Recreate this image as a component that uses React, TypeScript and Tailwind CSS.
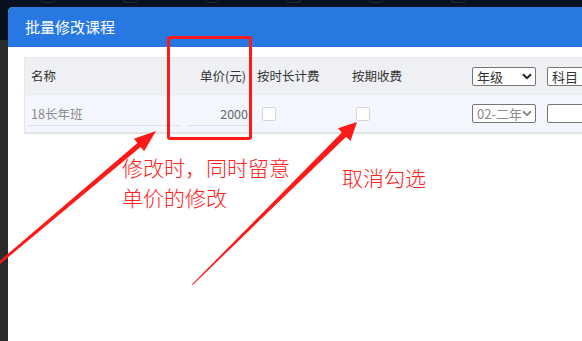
import React from "react";

const font = { fontFamily: '"Noto Sans CJK SC", "Noto Sans", sans-serif' };

function Select({ label, muted }: { label: string; muted?: boolean }) {
  return (
    <div className="flex h-[19px] w-[64px] items-center justify-between rounded-[2px] border border-[#767676] bg-white pl-[4px] pr-[3px]">
      <span className={`text-[13px] leading-none ${muted ? "text-[#8a8a8a]" : "text-[#333]"}`}>{label}</span>
      <svg width="10" height="7" viewBox="0 0 10 7">
        <path d="M1 1.2 L5 5.2 L9 1.2" fill="none" stroke={muted ? "#8a8a8a" : "#222"} strokeWidth="2" />
      </svg>
    </div>
  );
}

function Checkbox() {
  return <div className="h-[14px] w-[14px] rounded-[2px] border border-[#d5d5d5] bg-white" />;
}

export default function App() {
  return (
    <div
      className="relative h-[341px] w-[582px] overflow-hidden bg-[linear-gradient(#07111f_0_40px,#2c2c2c_40px)]"
      style={font}
    >
      {/* top bar with icons cut off */}
      <div className="flex h-[7px] gap-[68px] pl-[41px]">
        {[0, 1, 2, 3, 4, 5].map((i) => (
          <div key={i} className="-mt-[10px] h-[13px] w-[14px] rounded-[3px] border border-[#252c36]" />
        ))}
      </div>

      {/* dialog */}
      <div className="ml-[8px] h-[334px] overflow-hidden rounded-tl-[5px] bg-white">
        <div className="flex h-[40px] items-center bg-[#2878e2] pl-[17px] text-[15px] text-white">批量修改课程</div>

        <div className="pl-[16px] pt-[10px]">
          <div className="w-[620px] border-l border-[#e4e7ec]">
            {/* header row */}
            <div className="grid h-[37px] grid-cols-[159px_67px_90px_123px_77px_104px] items-center border-t border-[#e4e7ec] bg-[#eef0f4] text-[12.5px] text-[#333]">
              <div className="pl-[6px]">名称</div>
              <div className="pr-[5px] text-right">单价(元)</div>
              <div className="pl-[6px]">按时长计费</div>
              <div className="pl-[11px]">按期收费</div>
              <div className="pl-[8px]">
                <Select label="年级" />
              </div>
              <div className="pl-[6px]">
                <Select label="科目" />
              </div>
            </div>
            {/* body row */}
            <div className="grid h-[40px] grid-cols-[159px_67px_90px_123px_77px_104px] items-center border-t border-b-2 border-[#e1e5ea] border-t-[#e8edf3] bg-[#f3f7fd] text-[12.5px]">
              <div className="pl-[2px] pr-[3px]">
                <div className="mt-[4px] border-b border-[#dde3ea] pb-[2px] pl-[4px] text-[#8a8a8a]">18长年班</div>
              </div>
              <div className="pl-[4px]">
                <div className="mt-[4px] border-b border-[#dde3ea] pb-[2px] pr-[3px] text-right text-[#666]">2000</div>
              </div>
              <div className="pl-[11px]">
                <Checkbox />
              </div>
              <div className="pl-[15px]">
                <Checkbox />
              </div>
              <div className="pl-[8px]">
                <Select label="02-二年" muted />
              </div>
              <div className="pl-[6px]">
                <div className="h-[19px] w-[64px] rounded-[2px] border border-[#767676] bg-white" />
              </div>
            </div>
          </div>
        </div>
      </div>

      {/* annotations */}
      <div className="absolute left-[167px] top-[36px] h-[104px] w-[85px] rounded-[3px] border-[3px] border-[#ff1a1a]" />
      <div className="absolute left-[122px] top-[152px] text-[21px] font-light leading-[30px] text-[#ff2020]">
        <div>修改时，同时留意</div>
        <div>单价的修改</div>
      </div>
      <div className="absolute left-[342px] top-[162px] text-[21px] font-light leading-[30px] text-[#ff2020]">取消勾选</div>

      <svg className="pointer-events-none absolute inset-0" width="582" height="341" viewBox="0 0 582 341">
        <polygon points="-2,262.8 -1,261.5 137.4,143.1 133.9,138.8 156,131 144.1,151.2 140.6,146.9 0,264" fill="#ff1a1a" />
        <polygon points="191.5,284.5 192.5,283.8 341.8,132.5 337.9,128.2 357,122 350.5,141 346.2,136.8 193,284.8" fill="#ff1a1a" />
      </svg>
    </div>
  );
}
